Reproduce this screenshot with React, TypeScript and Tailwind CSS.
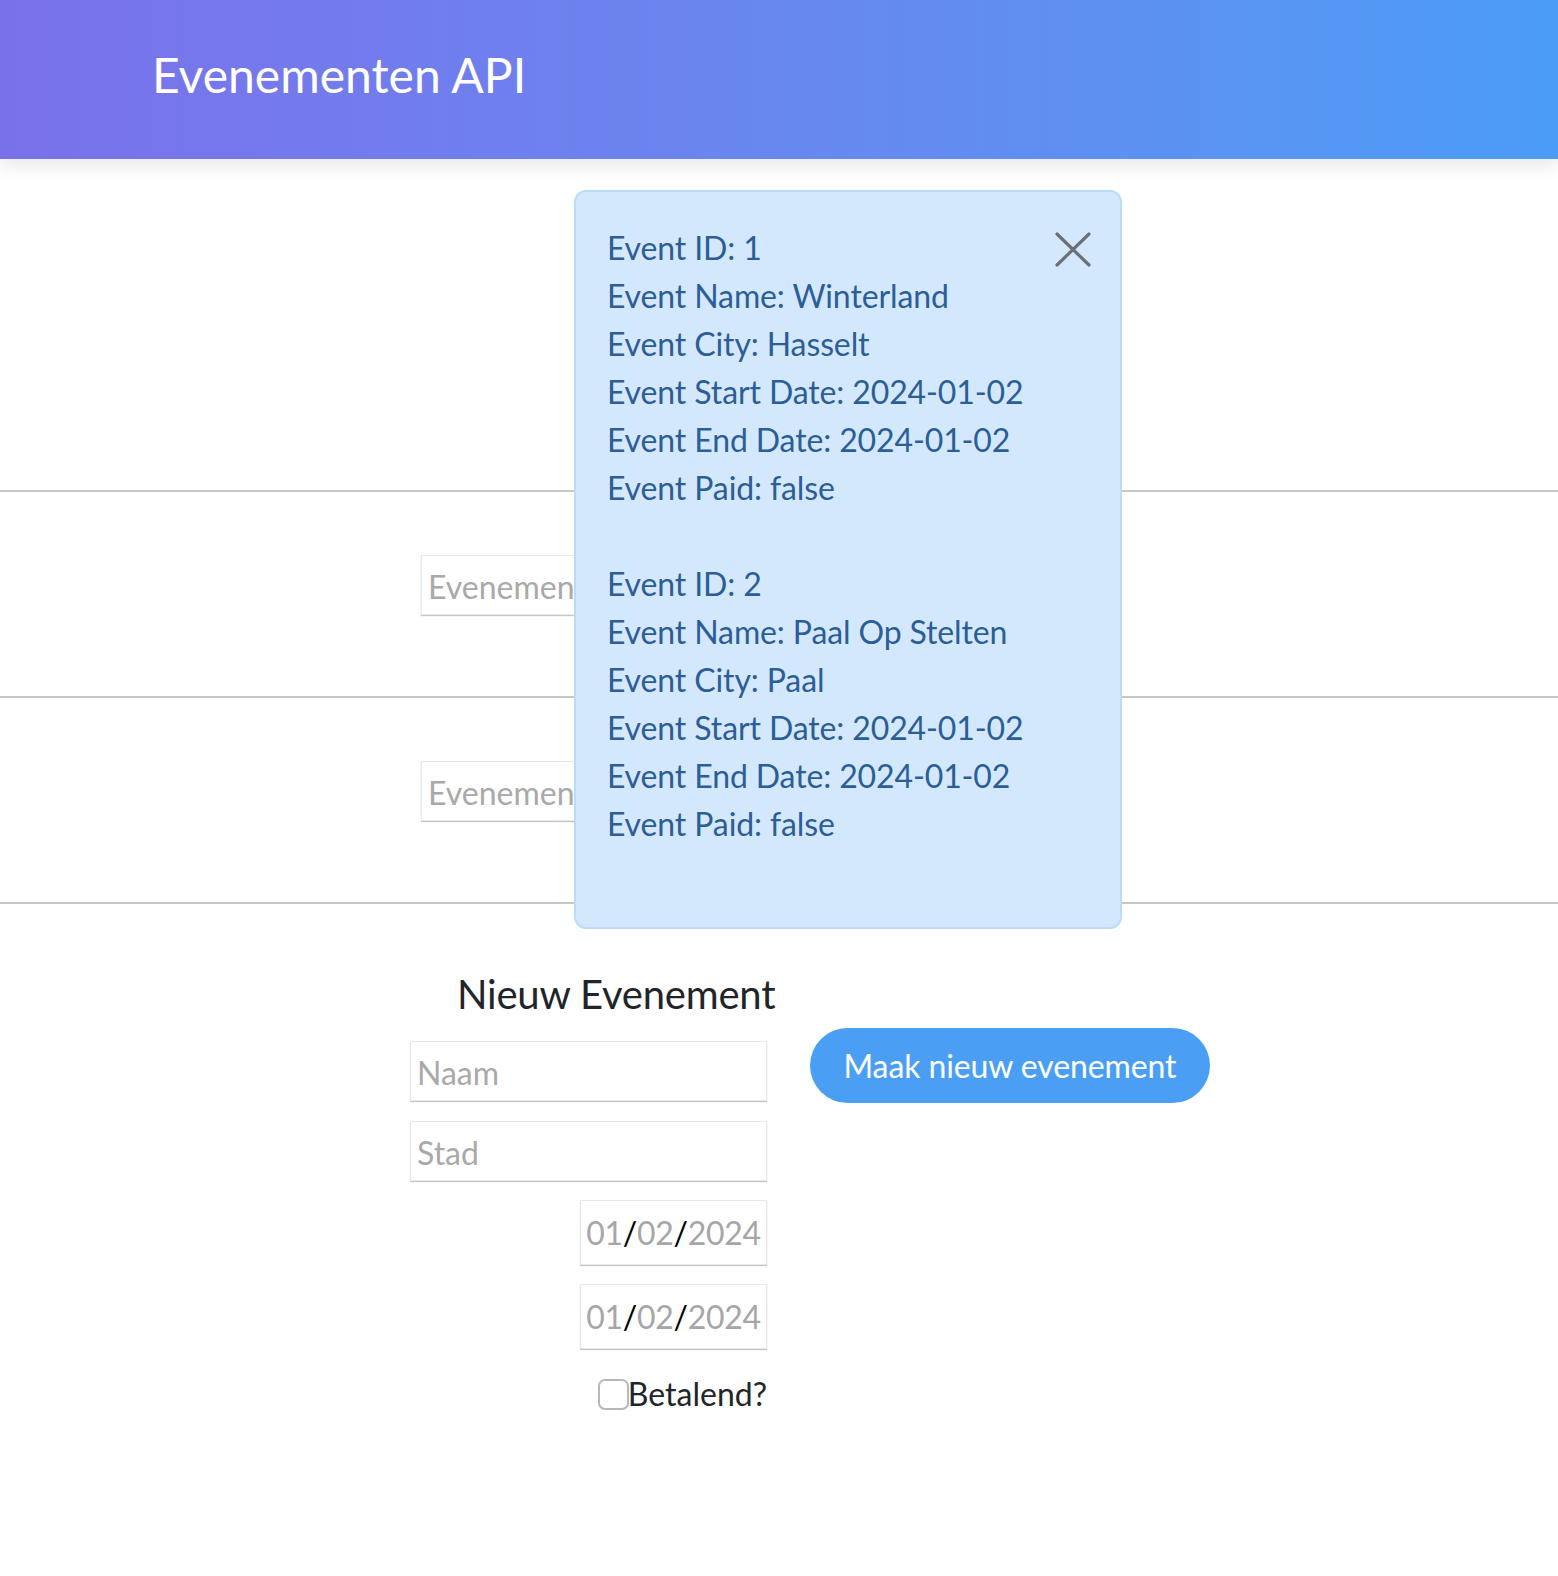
import React from "react";

function DateBox({ className = "" }: { className?: string }) {
  return (
    <div
      className={
        "w-[187px] h-[65px] flex items-center justify-center border border-[#e8e8e8] shadow-[0_1px_1px_rgba(0,0,0,0.22)] bg-white text-[32px] leading-none tracking-[-0.3px] " +
        className
      }
    >
      <span className="text-[#a6a6a6]">01</span>
      <span className="text-black">/</span>
      <span className="text-[#a6a6a6]">02</span>
      <span className="text-black">/</span>
      <span className="text-[#a6a6a6]">2024</span>
    </div>
  );
}

const inputCls =
  "h-[60px] border border-[#e8e8e8] shadow-[0_1px_1px_rgba(0,0,0,0.22)] bg-white px-[6px] pt-[3px] text-[32px] leading-none text-[#212529] placeholder:text-[#a9a9a9] outline-none";

function EventBlock({
  id,
  name,
  city,
}: {
  id: number;
  name: string;
  city: string;
}) {
  return (
    <div>
      <div>Event ID: {id}</div>
      <div>Event Name: {name}</div>
      <div>Event City: {city}</div>
      <div>Event Start Date: 2024-01-02</div>
      <div>Event End Date: 2024-01-02</div>
      <div>Event Paid: false</div>
    </div>
  );
}

export default function App() {
  return (
    <div className="relative min-h-[1576px] bg-white font-['Lato',sans-serif] text-[#212529]">
      <header className="relative z-10 h-[159px] bg-linear-to-r from-[#7a71ea] to-[#4a9cf5] shadow-[0_6px_18px_rgba(0,0,0,0.10)] pl-[152px] pt-[46px]">
        <h1 className="text-white text-[48px] leading-[58px] font-normal whitespace-nowrap">
          Evenementen API
        </h1>
      </header>

      <main>
        <div className="h-[333px] border-b-2 border-[#c8c8c8]" />
        <div className="h-[206px] border-b-2 border-[#c8c8c8] pt-[63px] pl-[421px]">
          <input className={inputCls + " w-[357px]"} placeholder="Evenement naam" />
        </div>
        <div className="h-[206px] border-b-2 border-[#c8c8c8] pt-[63px] pl-[421px]">
          <input className={inputCls + " w-[357px]"} placeholder="Evenement naam" />
        </div>

        <div className="flex pl-[410px] pt-[64px] gap-[43px]">
          <div className="w-[357px] flex flex-col items-end">
            <h2 className="self-start ml-[47px] mt-[2px] text-[40px] leading-[48px] font-normal whitespace-nowrap text-[#212529] tracking-[-0.2px]">
              Nieuw Evenement
            </h2>
            <input className={inputCls + " w-full mt-[23px]"} placeholder="Naam" />
            <input className={inputCls + " w-full mt-[20px]"} placeholder="Stad" />
            <DateBox className="mt-[19px]" />
            <DateBox className="mt-[19px]" />
            <label className="mt-[21px] h-[48px] flex items-center text-[32px] leading-[48px] text-[#212529]">
              <span className="w-[31px] h-[31px] rounded-[7px] border-2 border-[#b8b8b8] bg-white" />
              <span className="ml-[-1px]">Betalend?</span>
            </label>
          </div>
          <button className="mt-[60px] w-[400px] h-[75px] rounded-full bg-[#4a9ff5] text-white text-[32px] leading-none whitespace-nowrap tracking-[-0.1px]">
            Maak nieuw evenement
          </button>
        </div>
      </main>

      <div className="absolute z-20 left-[574px] top-[190px] w-[548px] h-[739px] rounded-[12px] border-2 border-[#badbfb] bg-[#d4e8fd] text-[#2b5e97] text-[32px] leading-[48px] pt-[32px] pl-[31px] tracking-[-0.12px]">
        <EventBlock id={1} name="Winterland" city="Hasselt" />
        <div className="h-[48px]" />
        <EventBlock id={2} name="Paal Op Stelten" city="Paal" />
        <svg
          className="absolute top-[40px] right-[29px]"
          width="36"
          height="35"
          viewBox="0 0 36 35"
          fill="none"
          stroke="#6b7076"
          strokeWidth="3.2"
          strokeLinecap="round"
        >
          <line x1="2" y1="2" x2="34" y2="33" />
          <line x1="34" y1="2" x2="2" y2="33" />
        </svg>
      </div>
    </div>
  );
}
